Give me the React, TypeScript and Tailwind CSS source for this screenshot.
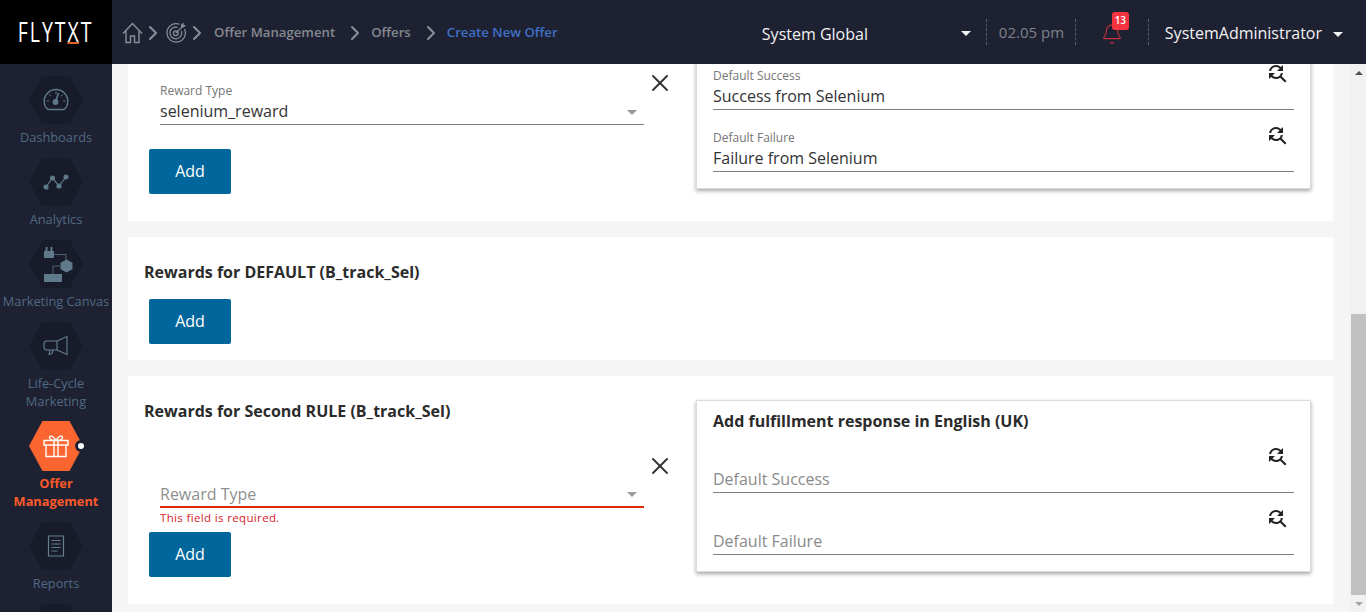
import type { ReactNode } from "react";
import { MdFindReplace } from "react-icons/md";
import { ChevronRight, Bell, X } from "lucide-react";

const GaugeIcon = () => (
  <svg width="26" height="24" viewBox="0 0 26 24" fill="none" stroke="#5f7a8a" strokeWidth="1.4">
    <path d="M5 21.5C2.5 19.5 1.2 16.5 1.2 13.2 1.2 6.7 6.5 1.5 13 1.5s11.800 5.200 11.800 11.700c0 3.300-1.300 6.300-3.800 8.300z" />
    <path d="M13 3.500v2.500M3.500 13h2.500M20 13h2.500M6.300 6.500l1.700 1.700M19.700 6.500 18 8.200" strokeWidth="1" />
    <circle cx="12.500" cy="14" r="2.200" fill="#5f7a8a" />
    <path d="M13 12.500 15.500 5" strokeWidth="1.600" />
  </svg>
);

const AnalyticsIcon = () => (
  <svg width="26" height="16" viewBox="0 0 26 16" fill="#5f7a8a" stroke="#5f7a8a" strokeWidth="1.200">
    <path d="M3 13 9.500 4 16 12 23 3" fill="none" />
    <circle cx="3" cy="13" r="2" />
    <circle cx="9.500" cy="4" r="2" />
    <circle cx="16" cy="12" r="2" />
    <circle cx="23" cy="3" r="2" />
  </svg>
);

const CanvasIcon = () => (
  <svg className="ml-[5px]" width="29" height="36" viewBox="0 0 29 36" fill="#5f7a8a">
    <path d="M0 5h10v7H0z" />
    <path d="M1.500 1h2v4h-2zM6.500 1h2v4h-2z" />
    <path d="M10 8.500h12V14M16 20H9v8" fill="none" stroke="#5f7a8a" strokeWidth="0.800" />
    <path d="M22.500 13.500l6 3.250v6.500l-6 3.250-6-3.250v-6.500z" />
    <path d="M0 28h18v8H0z" />
  </svg>
);

const MegaphoneIcon = () => (
  <svg width="26" height="22" viewBox="0 0 26 22" fill="none" stroke="#64808f" strokeWidth="1.100">
    <path d="M4 6h10v9H4c-1.500 0-3-1-3-2.500v-4C1 7 2.500 6 4 6z" />
    <path d="M7 15l-1 4.500 3-1 1-3.500M14 6l10-4.500v18L14 15" />
  </svg>
);

const GiftIcon = () => (
  <svg width="26" height="24" viewBox="0 0 26 24" fill="none" stroke="#fff" strokeWidth="1.400">
    <path d="M1 6.500h24v4.500H1zM3 11v11.500h20V11M11 6.500v16M15 6.500v16" />
    <path d="M13 6.500C10 6.500 6.500 5.500 6.500 3.500S10 1 13 6.500zM13 6.500c3 0 6.500-1 6.500-3S16 1 13 6.500z" />
  </svg>
);

const ReportIcon = () => (
  <svg width="18" height="22" viewBox="0 0 18 22" fill="none" stroke="#64808f" strokeWidth="1.200">
    <path d="M1.500 1h15v20h-15z" />
    <path d="M4.500 5.500h9M4.500 9h9M4.500 12.500h9M4.500 16h6" />
  </svg>
);

const HomeIcon = () => (
  <svg width="21" height="22" viewBox="0 0 21 22" fill="none" stroke="#8b8f98" strokeWidth="1.400">
    <path d="M1 11.500 10.500 1.500 20 11.500M4 9v11.500h4.500v-6.500h4v6.500H17V9" />
  </svg>
);

const TargetIcon = () => (
  <svg width="21" height="21" viewBox="0 0 21 21" fill="none" stroke="#8b8f98" strokeWidth="1.200">
    <path d="M18.500 7A9.200 9.200 0 1 1 13.500 2.300" />
    <path d="M15.400 9A5.900 5.900 0 1 1 11.500 5.300" />
    <circle cx="9.800" cy="11.200" r="2.400" />
    <path d="M9.800 11.200 17 4" />
    <path d="M15 5V2.500L17.500 0.500V3h2.500L17.500 5.500z" fill="#8b8f98" stroke="none" />
  </svg>
);

const Caret = ({ className }: { className: string }) => (
  <span className={"h-0 w-0 border-x-[5px] border-t-[5px] border-x-transparent " + className} />
);

const Crumb = ({ className }: { className: string }) => (
  <ChevronRight className={"text-[#8b8f98] " + className} size={24} strokeWidth={2} />
);

const nav: { label: string[]; icon: ReactNode; active?: boolean }[] = [
  { label: ["Dashboards"], icon: <GaugeIcon /> },
  { label: ["Analytics"], icon: <AnalyticsIcon /> },
  { label: ["Marketing Canvas"], icon: <CanvasIcon /> },
  { label: ["Life-Cycle", "Marketing"], icon: <MegaphoneIcon /> },
  { label: ["Offer", "Management"], icon: <GiftIcon />, active: true },
  { label: ["Reports"], icon: <ReportIcon /> },
  { label: [], icon: null },
];

const Sidebar = () => (
  <aside className="flex w-[112px] shrink-0 flex-col items-center overflow-hidden bg-[#1e2132] pt-3">
    {nav.map((item, i) => (
      <div
        key={i}
        className={"flex shrink-0 flex-col items-center " + (item.label.length > 1 ? "pb-[11px]" : "pb-[12px]")}
      >
        <div className="relative">
          <div
            className={
              "flex w-[54px] items-center justify-center [clip-path:polygon(25%_0,75%_0,100%_50%,75%_100%,25%_100%,0_50%)] " +
              (item.active ? "h-[50px] bg-[#fb6530]" : "h-[48px] bg-[#181b2a]")
            }
          >
            {item.icon}
          </div>
          {item.active && (
            <span className="absolute right-[-4px] top-[19px] h-[12px] w-[12px] rounded-full border-[3px] border-[#1e2132] bg-white" />
          )}
        </div>
        <div
          className={
            "whitespace-nowrap text-center text-[12.800px] leading-[18px] " +
            (item.active ? "mb-px mt-[3px] font-bold text-[#fb5a2b]" : "mt-1 text-[#4f6a82]")
          }
        >
          {item.label.map((l) => (
            <div key={l}>{l}</div>
          ))}
        </div>
      </div>
    ))}
  </aside>
);

const Header = () => (
  <header className="flex h-[64px] shrink-0 items-center bg-[#1e2132]">
    <div className="flex h-full w-[112px] shrink-0 items-center justify-center bg-black">
      <span className="[transform:scaleX(0.72)] text-[27px] leading-[24px] tracking-[2.800px] text-white">
        FLYT
        <span className="mr-[2.800px] inline-block border-b-2 border-[#e2622a] leading-[20px] tracking-normal">X</span>T
      </span>
    </div>
    <div className="ml-[10px] mt-[1px] flex items-center text-[13.200px] font-semibold text-[#85888f]">
      <HomeIcon />
      <Crumb className="-ml-[2px]" />
      <span className="ml-[1px]"><TargetIcon /></span>
      <Crumb className="-ml-[2px]" />
      <span className="ml-[5px]">Offer Management</span>
      <Crumb className="ml-[8px]" />
      <span className="ml-[4px]">Offers</span>
      <Crumb className="ml-[8px]" />
      <span className="ml-[4px] text-[#3f6fc4]">Create New Offer</span>
    </div>
    <div className="ml-auto flex items-center pr-[23px] text-[#f2f2f2]">
      <div className="mt-[3px] flex w-[209px] items-center justify-between">
        <span className="text-[16px]">System Global</span>
        <Caret className="border-t-[#f2f2f2]" />
      </div>
      <span className="ml-[15px] h-[26px] border-l border-dashed border-[#5a5d68]" />
      <span className="ml-[12px] w-[65px] whitespace-nowrap text-[15px] text-[#7f828b]">02.05 pm</span>
      <span className="ml-[11px] h-[26px] border-l border-dashed border-[#5a5d68]" />
      <div className="relative ml-[25px] mt-[3px] w-[47px]">
        <Bell size={22} strokeWidth={1.200} className="text-[#c8323c]" />
        <span className="absolute left-[11px] top-[-11px] flex h-[18px] w-[17px] items-center justify-center rounded-[3px] bg-[#f5333f] text-[10px] font-semibold text-white">
          13
        </span>
      </div>
      <span className="h-[26px] border-l border-dashed border-[#5a5d68]" />
      <span className="ml-[16px] mt-[2px] text-[16px]">SystemAdministrator</span>
      <Caret className="ml-[11px] mt-[5px] border-t-[#f2f2f2]" />
    </div>
  </header>
);

const ResponseField = ({ label, value }: { label: string; value?: string }) => (
  <div className="relative flex h-[62px] flex-col justify-end border-b border-[#7d7d7d]">
    <MdFindReplace className="absolute right-[5px] top-[13px] text-[#222]" size={24} />
    {value && <span className="absolute top-[20px] text-[12px] leading-[16px] text-[#757575]">{label}</span>}
    <span className={"mb-px text-[16px] leading-[24px] " + (value ? "text-[#333]" : "text-[#8a8a8a]")}>
      {value ?? label}
    </span>
  </div>
);

const ResponseBox = ({ title, success, failure }: { title?: string; success?: string; failure?: string }) => (
  <div className="mt-[24px] h-[172px] w-[615px] shrink-0 border border-[#dcdcdc] px-[16px] pt-[8px] shadow-[0_2px_4px_rgba(0,0,0,0.35)]">
    <h3 className="h-[22px] text-[16px] font-bold leading-[24px] text-[#2b2b2b]">{title}</h3>
    <ResponseField label="Default Success" value={success} />
    <ResponseField label="Default Failure" value={failure} />
  </div>
);

const AddButton = () => (
  <button className="ml-[5px] flex h-[45px] w-[82px] items-center justify-center rounded-[2px] bg-[#00669b] pb-[2px] text-[16px] text-white">
    Add
  </button>
);

const RewardSelect = ({ value, error }: { value?: string; error?: boolean }) => (
  <div className="mt-[36px] flex pl-[16px]">
    <div className="w-[484px]">
      <div className="h-[25px] pt-[8px] text-[12px] leading-[16px] text-[#757575]">{value ? "Reward Type" : ""}</div>
      <div
        className={
          "flex h-[25px] items-center justify-between border-b pb-[2px] pr-[7px] " +
          (error ? "border-b-2 border-[#dd2c00]" : "border-[#7d7d7d]")
        }
      >
        <span className={"text-[16px] leading-[24px] " + (value ? "text-[#333]" : "text-[#8f8f8f]")}>
          {value ?? "Reward Type"}
        </span>
        <Caret className="mt-[2px] border-t-[#9a9a9a]" />
      </div>
      <div className="h-[24px] pt-[2px] text-[11.500px] leading-[16px] tracking-[0.350px] text-[#d9232b]">
        {error ? "This field is required." : ""}
      </div>
    </div>
    <X className="-mt-[6px] ml-[2px] text-[#333]" size={28} strokeWidth={1.600} />
  </div>
);

const Scrollbar = () => (
  <div className="relative flex w-[16px] shrink-0 flex-col bg-[#f1f1f1] pl-px">
    <div className="h-[250px]">
      <span className="mx-auto mt-[7px] block h-0 w-0 border-x-[4px] border-b-[4px] border-x-transparent border-b-[#505050]" />
    </div>
    <div className="h-[281px] bg-[#c1c1c1]" />
    <span className="mx-auto mt-[7px] block h-0 w-0 border-x-[4px] border-t-[4px] border-x-transparent border-t-[#a3a3a3]" />
  </div>
);

export default function App() {
  return (
    <div className="flex h-screen w-screen flex-col overflow-hidden bg-[#f5f5f5] font-['Open_Sans',sans-serif]">
      <Header />
      <div className="flex min-h-0 flex-1">
        <Sidebar />
        <main className="min-w-0 flex-1 overflow-hidden pl-[16px] pr-[17px]">
          <div className="-mt-[71px] flex flex-col gap-[16px]">
            <section className="flex h-[228px] bg-white pl-[16px] pt-[24px]">
              <div className="w-[552px] shrink-0">
                <div className="h-[22px]" />
                <RewardSelect value="selenium_reward" />
                <AddButton />
              </div>
              <div className="-mt-[24px]">
                <ResponseBox success="Success from Selenium" failure="Failure from Selenium" />
              </div>
            </section>
            <section className="h-[123px] bg-white pl-[16px] pt-[24px]">
              <h2 className="h-[22px] text-[16px] font-bold leading-[22px] text-[#2b2b2b]">Rewards for DEFAULT (B_track_Sel)</h2>
              <div className="mt-[16px]">
                <AddButton />
              </div>
            </section>
            <section className="flex h-[228px] bg-white pl-[16px] pt-[24px]">
              <div className="w-[552px] shrink-0">
                <h2 className="h-[22px] text-[16px] font-bold leading-[22px] text-[#2b2b2b]">Rewards for Second RULE (B_track_Sel)</h2>
                <RewardSelect error />
                <AddButton />
              </div>
              <div className="-mt-[24px]">
                <ResponseBox title="Add fulfillment response in English (UK)" />
              </div>
            </section>
          </div>
        </main>
        <Scrollbar />
      </div>
    </div>
  );
}
